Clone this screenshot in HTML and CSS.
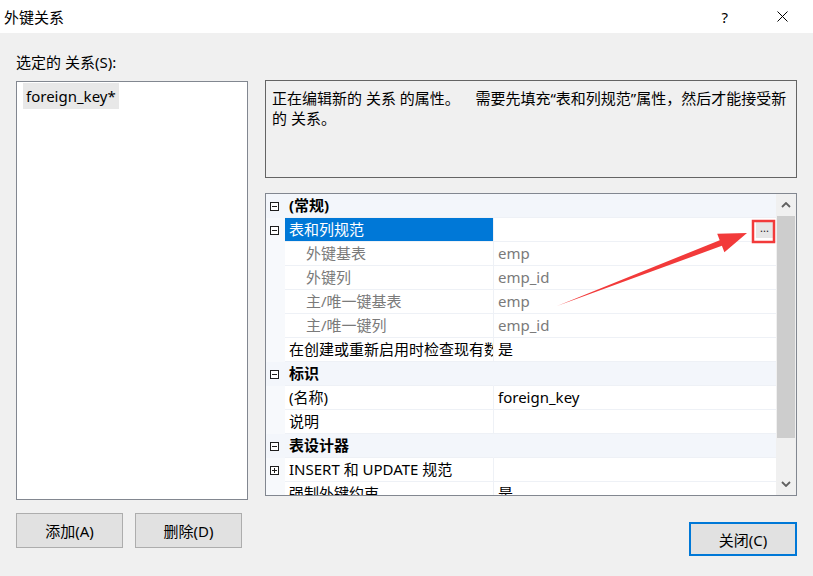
FILE: index.html
```html
<!DOCTYPE html>
<html lang="zh-CN">
<head>
  <meta charset="UTF-8" />
  <title>外键关系</title>
  <link rel="stylesheet" href="styles.css">
</head>
<body>
  <div class="window">
    <div class="titlebar">
      <span class="title">外键关系</span>
      <span class="help">?</span>
      <svg class="close-x" width="11" height="11" viewBox="0 0 11 11">
        <path d="M0.5 0.5 L10.5 10.5 M10.5 0.5 L0.5 10.5" stroke="#000" stroke-width="1" fill="none"/>
      </svg>
    </div>

    <div class="content">
      <!-- left: relation list -->
      <div class="left">
        <div class="caption">选定的 关系(S):</div>
        <div class="listbox">
          <div class="list-item">foreign_key*</div>
        </div>
        <div class="left-buttons">
          <button class="btn">添加(A)</button>
          <button class="btn">删除(D)</button>
        </div>
      </div>

      <!-- right: description + property grid -->
      <div class="right">
        <div class="description">正在编辑新的 关系 的属性。    需要先填充“表和列规范”属性，然后才能接受新的 关系。</div>

        <div class="propgrid">
          <div class="rows">
            <div class="row category">
              <div class="gutter"><span class="toggle minus"></span></div>
              <div class="label">(常规)</div>
              <div class="value"></div>
            </div>
            <div class="row">
              <div class="gutter"><span class="toggle minus"></span></div>
              <div class="label selected">表和列规范</div>
              <div class="value with-btn"><span></span><span class="dots">...</span></div>
            </div>
            <div class="row sub">
              <div class="gutter"></div>
              <div class="label">外键基表</div>
              <div class="value">emp</div>
            </div>
            <div class="row sub">
              <div class="gutter"></div>
              <div class="label">外键列</div>
              <div class="value">emp_id</div>
            </div>
            <div class="row sub">
              <div class="gutter"></div>
              <div class="label">主/唯一键基表</div>
              <div class="value">emp</div>
            </div>
            <div class="row sub">
              <div class="gutter"></div>
              <div class="label">主/唯一键列</div>
              <div class="value">emp_id</div>
            </div>
            <div class="row">
              <div class="gutter"></div>
              <div class="label">在创建或重新启用时检查现有数据</div>
              <div class="value">是</div>
            </div>
            <div class="row category">
              <div class="gutter"><span class="toggle minus"></span></div>
              <div class="label">标识</div>
              <div class="value"></div>
            </div>
            <div class="row">
              <div class="gutter"></div>
              <div class="label">(名称)</div>
              <div class="value">foreign_key</div>
            </div>
            <div class="row">
              <div class="gutter"></div>
              <div class="label">说明</div>
              <div class="value"></div>
            </div>
            <div class="row category">
              <div class="gutter"><span class="toggle minus"></span></div>
              <div class="label">表设计器</div>
              <div class="value"></div>
            </div>
            <div class="row">
              <div class="gutter"><span class="toggle plus"></span></div>
              <div class="label">INSERT 和 UPDATE 规范</div>
              <div class="value"></div>
            </div>
            <div class="row">
              <div class="gutter"></div>
              <div class="label">强制外键约束</div>
              <div class="value">是</div>
            </div>
          </div>
          <div class="scrollbar">
            <div class="sb-arrow">
              <svg width="10" height="6" viewBox="0 0 10 6"><path d="M1 5 L5 1 L9 5" stroke="#606060" stroke-width="1.8" fill="none"/></svg>
            </div>
            <div class="sb-thumb"></div>
            <div class="sb-track"></div>
            <div class="sb-arrow">
              <svg width="10" height="6" viewBox="0 0 10 6"><path d="M1 1 L5 5 L9 1" stroke="#606060" stroke-width="1.8" fill="none"/></svg>
            </div>
          </div>
        </div>

        <div class="right-buttons">
          <button class="btn default">关闭(C)</button>
        </div>
      </div>
    </div>

    <!-- red annotation drawn over the dialog -->
    <svg class="annotation" width="813" height="576" viewBox="0 0 813 576">
      <rect x="753" y="221" width="21" height="21" fill="none" stroke="#f23a3a" stroke-width="2.5"/>
      <polygon points="557,306 719.7,240.2 717.2,233.7 747,233 724.4,252.3 721.9,245.8" fill="#f23a3a"/>
    </svg>
  </div>
</body>
</html>
```

FILE: styles.css
```css
body {
  margin: 0;
  font-family: "Noto Sans", "Noto Sans CJK SC", sans-serif;
  font-size: 15px;
  color: #000;
  background: #f0f0f0;
}

.window {
  position: relative;
  width: 813px;
  height: 576px;
  background: #f0f0f0;
  overflow: hidden;
}

.titlebar {
  height: 33px;
  background: #fff;
  display: flex;
  align-items: center;
  padding-left: 4px;
}

.title {
  flex: 1;
}

.help {
  margin-right: 49px;
  font-size: 15px;
}

.close-x {
  margin-right: 25px;
}

.content {
  display: flex;
  gap: 17px;
  padding: 0 16px;
}

.left {
  width: 232px;
}

.caption {
  margin-top: 19px;
  line-height: 20px;
  height: 20px;
}

.listbox {
  margin-top: 9px;
  height: 419px;
  box-sizing: border-box;
  border: 1px solid #828790;
  background: #fff;
  padding: 1px 6px;
}

.list-item {
  display: inline-block;
  height: 26px;
  line-height: 26px;
  padding: 0 3px;
  background: #e8e8e8;
}

.left-buttons {
  margin-top: 13px;
  display: flex;
  gap: 12px;
}

.btn {
  width: 107px;
  height: 35px;
  background: #e1e1e1;
  border: 1px solid #adadad;
  font-family: inherit;
  font-size: 15px;
  color: #000;
  padding: 0;
}

.btn.default {
  width: 108px;
  height: 34px;
  border: 2px solid #0078d7;
}

.right {
  width: 532px;
}

.description {
  margin-top: 47px;
  height: 98px;
  box-sizing: border-box;
  border: 1px solid #646464;
  padding: 7px 6px;
  line-height: 20px;
  white-space: pre-wrap;
}

.propgrid {
  margin-top: 15px;
  height: 303px;
  box-sizing: border-box;
  border: 1px solid #828790;
  background: #fff;
  display: flex;
  overflow: hidden;
}

.rows {
  flex: 1;
}

.row {
  display: grid;
  grid-template-columns: 19px 208px 1fr;
  height: 24px;
  line-height: 23px;
}

.gutter {
  background: #f7f9fc;
  display: flex;
  align-items: center;
  padding-left: 4px;
}

.label,
.value {
  border-bottom: 1px solid #eef1f6;
  white-space: nowrap;
  overflow: hidden;
  padding-left: 4px;
}

.value {
  border-left: 1px solid #eef1f6;
}

.category .gutter,
.category .label,
.category .value {
  background: #f3f6fb;
}

.category .label {
  font-weight: bold;
}

.category .value {
  border-left-color: #f3f6fb;
}

.label.selected {
  background: #0078d7;
  color: #fff;
}

.sub .label {
  padding-left: 21px;
  color: #7a7a7a;
}

.sub .value {
  color: #7a7a7a;
}

.with-btn {
  display: flex;
  justify-content: space-between;
  align-items: center;
  padding-right: 3px;
}

.dots {
  width: 17px;
  height: 17px;
  background: #e6e6e6;
  font-size: 11px;
  line-height: 13px;
  text-align: center;
  color: #222;
}

.toggle {
  position: relative;
  width: 7px;
  height: 7px;
  border: 1px solid #1e1e1e;
  background: #fff;
}

.toggle::before {
  content: "";
  position: absolute;
  left: 1px;
  top: 3px;
  width: 5px;
  height: 1px;
  background: #1e1e1e;
}

.toggle.plus::after {
  content: "";
  position: absolute;
  left: 3px;
  top: 1px;
  width: 1px;
  height: 5px;
  background: #1e1e1e;
}

.scrollbar {
  width: 20px;
  background: #f0f0f0;
  display: flex;
  flex-direction: column;
}

.sb-arrow {
  height: 22px;
  display: flex;
  align-items: center;
  justify-content: center;
}

.sb-thumb {
  height: 222px;
  margin: 0 1px;
  background: #cdcdcd;
}

.sb-track {
  flex: 1;
}

.right-buttons {
  margin-top: 26px;
  display: flex;
  justify-content: flex-end;
}

.annotation {
  position: absolute;
  left: 0;
  top: 0;
  pointer-events: none;
}
```
